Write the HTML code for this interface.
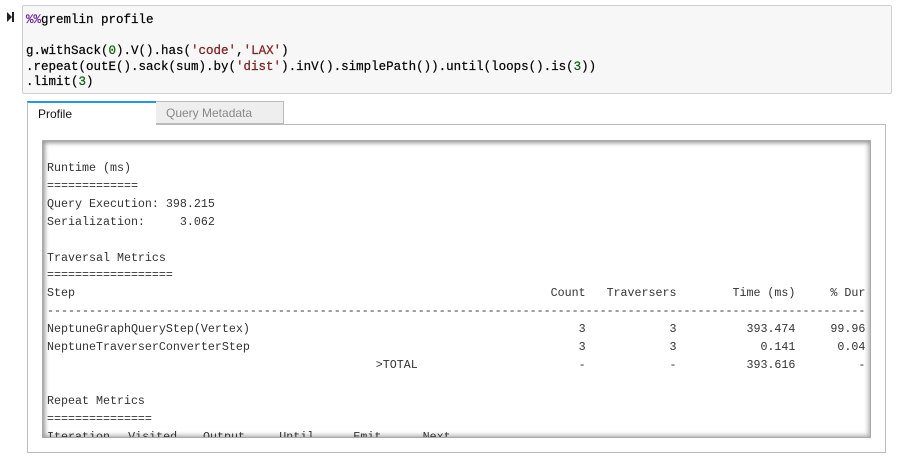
<!DOCTYPE html>
<html><head><style>
body{margin:0;width:902px;height:460px;background:#fff;position:relative;overflow:hidden;font-family:"Liberation Sans",sans-serif}
.prompt{position:absolute;left:7px;top:12px;width:0;height:0;border-top:5px solid transparent;border-bottom:5px solid transparent;border-left:5px solid #222}
.prompt2{position:absolute;left:12px;top:12px;width:2px;height:10px;background:#222}
.cell{position:absolute;left:22px;top:5px;width:868px;height:87px;background:#f7f7f7;border:1px solid #cfcfcf;border-radius:2px}
.code{position:absolute;left:26px;top:13px;font-family:"Liberation Mono",monospace;font-size:12.5px;line-height:15.5px;color:#000;white-space:pre;margin:0;-webkit-text-stroke:0.2px #000}
.m{color:#aa22ff}.s{color:#ba2121}.n{color:#008800}
.tab{position:absolute;top:101px;height:23px;font-size:12px;line-height:23px;box-sizing:border-box}
.t1{left:27px;width:129px;border-top:2px solid #2196f3;border-left:1px solid #bbb;background:#fff;padding-left:10px;color:#111;height:24px;z-index:2}
.t2{left:155px;width:129px;border:1px solid #bbb;background:#eee;color:#888;padding-left:10px}
.panel{position:absolute;left:27px;top:124px;width:859px;height:329px;border:1px solid #bbb;box-sizing:border-box;background:#fff}
.inner{position:absolute;left:42px;top:140px;width:829px;height:298px;border:1px solid #aaa;box-sizing:border-box;box-shadow:inset 2px 2px 4px #999, inset -2px -2px 4px #bbb;overflow:hidden}
.pre{position:absolute;left:4px;top:19px;font-family:"Liberation Mono",monospace;font-size:11.67px;line-height:17.9px;color:#333;white-space:pre}
.pre span{display:inline-block;text-align:right}
.pre .a{width:47ch;text-align:left}
.pre .l{text-align:left}
</style></head><body>
<div class="prompt"></div><div class="prompt2"></div>
<div class="cell"></div>
<pre class="code"><span class="m">%%</span>gremlin profile

g.withSack(<span class="n">0</span>).V().has(<span class="s">'code'</span>,<span class="s">'LAX'</span>)
.repeat(outE().sack(sum).by(<span class="s">'dist'</span>).inV().simplePath()).until(loops().is(<span class="n">3</span>))
.limit(<span class="n">3</span>)</pre>
<div class="panel"></div>
<div class="tab t2">Query Metadata</div>
<div class="tab t1">Profile</div>
<div class="inner"><div class="pre">Runtime (ms)
=============
Query Execution: 398.215
Serialization:     3.062

Traversal Metrics
==================
<span class="a">Step</span><span style="width:30ch">Count</span><span style="width:13ch">Traversers</span><span style="width:17ch">Time (ms)</span><span style="width:10ch">% Dur</span>
---------------------------------------------------------------------------------------------------------------------
<span class="a">NeptuneGraphQueryStep(Vertex)</span><span style="width:30ch">3</span><span style="width:13ch">3</span><span style="width:17ch">393.474</span><span style="width:10ch">99.96</span>
<span class="a">NeptuneTraverserConverterStep</span><span style="width:30ch">3</span><span style="width:13ch">3</span><span style="width:17ch">0.141</span><span style="width:10ch">0.04</span>
<span class="a"></span><span style="width:30ch;text-align:left">&gt;TOTAL</span><span style="width:0"></span><span style="width:0;margin-left:-30ch"></span><span style="width:30ch">-</span><span style="width:13ch">-</span><span style="width:17ch">393.616</span><span style="width:10ch">-</span>

Repeat Metrics
===============
<span class="l" style="width:11.6ch">Iteration</span><span class="l" style="width:10.7ch">Visited</span><span class="l" style="width:10.9ch">Output</span><span class="l" style="width:10.6ch">Until</span><span class="l" style="width:9.9ch">Emit</span><span class="l">Next</span></div></div>
</body></html>
